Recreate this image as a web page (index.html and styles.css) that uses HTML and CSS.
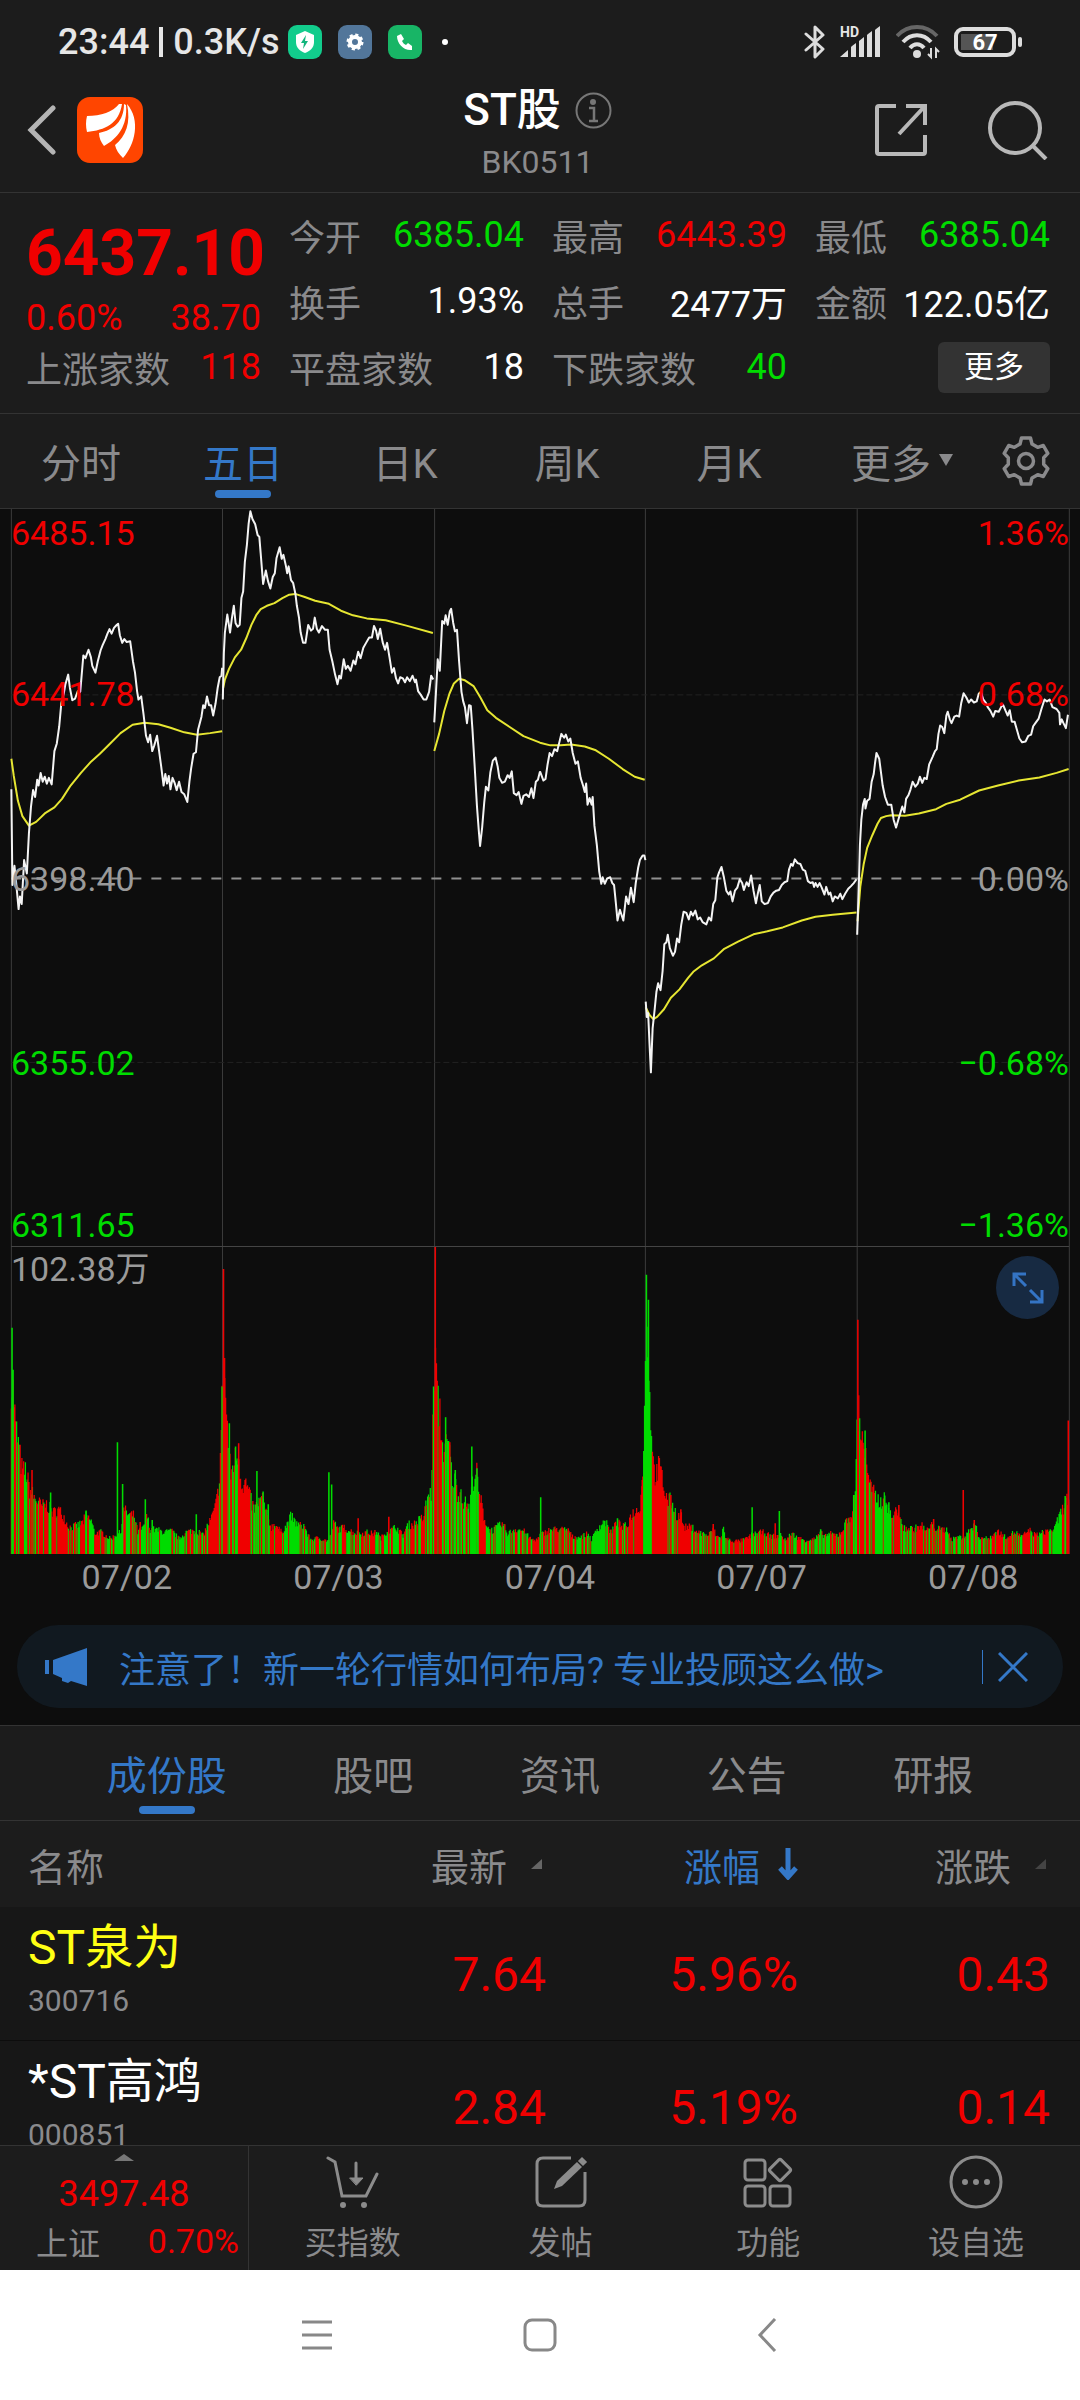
FILE: index.html
```html
<!DOCTYPE html>
<html lang="zh-CN">
<head>
<meta charset="utf-8">
<meta name="viewport" content="width=device-width, initial-scale=1">
<title>ST股 BK0511</title>
<link rel="stylesheet" href="styles.css">
</head>
<body>
<div class="app">
  <div class="status">
    <span class="status-text"><span>23:44</span><span class="status-bar"></span><span>0.3K/s</span></span>
    <span class="status-apps">
      <svg width="34" height="34" viewBox="0 0 34 34"><rect width="34" height="34" rx="9" fill="#12cc8c"/><path d="M17 6l9 4v7c0 6-4 9-9 11-5-2-9-5-9-11v-7z" fill="#fff"/><path d="M18 10l-5 8h3l-1 6 5-8h-3z" fill="#12b57c"/></svg>
      <svg width="34" height="34" viewBox="0 0 34 34"><rect width="34" height="34" rx="9" fill="#52769a"/><circle cx="17" cy="17" r="5" fill="none" stroke="#fff" stroke-width="4"/><circle cx="17" cy="17" r="7" fill="none" stroke="#fff" stroke-width="3" stroke-dasharray="3 2.5"/></svg>
      <svg width="34" height="34" viewBox="0 0 34 34"><rect width="34" height="34" rx="9" fill="#18b566"/><path d="M9 11l4-2 3 5-2 2c1 2 2 3 4 4l2-2 4 3v4c-8 1-15-6-15-14z" fill="#fff"/></svg>
    </span>
    <span class="status-dot"></span>
    <span class="status-right">
      <svg class="bt" width="22" height="34" viewBox="0 0 22 34"><path d="M2 9l17 15-8 8V2l8 8L2 25" fill="none" stroke="#ddd" stroke-width="3" stroke-linejoin="round" stroke-linecap="round"/></svg>
      <span class="signal">
        <svg width="42" height="32" viewBox="0 0 42 32"><path d="M0 31l8-7v7zM12 20l4-3v14h-5V21zM19 15l5-4v20h-5zM28 8l4-3v26h-5V9zM36 3l4-3v31h-5V4z" fill="#ddd"/></svg>
        <span class="hd">HD</span>
      </span>
      <svg class="wifi" width="44" height="36" viewBox="0 0 44 36"><g fill="none" stroke-width="4"><path d="M1 12C12 0 30 0 41 12" stroke="#666"/><path d="M7 18c8-9 20-9 28 0M14 24c4-5 10-5 14 0" stroke="#ddd"/></g><circle cx="21" cy="30" r="4" fill="#ddd"/><path d="M35 24v9l-3-3M40 34v-9l3 3" stroke="#ddd" stroke-width="2" fill="none"/></svg>
      <span class="battery"><span class="battery-text">67</span></span>
    </span>
  </div>

  <header class="title-bar">
    <div class="title-left">
      <button class="icon-btn" aria-label="返回"><svg width="30" height="50" viewBox="0 0 30 50"><path d="M26 3L4 25l22 22" fill="none" stroke="#b4b4b4" stroke-width="5" stroke-linecap="round"/></svg></button>
      <svg width="66" height="66" viewBox="0 0 66 66"><rect width="66" height="66" rx="13" fill="#ff4500"/><g fill="#fff"><path d="M42 7C36 15 24 19 10 19q-2 8 0 16C28 33 42 27 45 7z"/><path d="M47 7c0 17-10 26-25 29 0 5 2 9 5 13C40 42 51 29 49 8z"/><path d="M50 7c4 19-1 32-12 41 1 5 4 9 8 13 12-13 18-38 4-54z"/></g></svg>
    </div>
    <div class="title-mid">
      <h1>ST股<svg class="info" width="37" height="37" viewBox="0 0 37 37" fill="none" stroke="#777" stroke-width="2"><circle cx="18.500" cy="18.500" r="17"/><circle cx="18" cy="10" r="2" fill="#777"/><path d="M14 16h5v13M14 29h9" stroke-width="2.500"/></svg></h1>
      <p>BK0511</p>
    </div>
    <div class="title-right">
      <button class="icon-btn" aria-label="分享"><svg width="54" height="54" viewBox="0 0 54 54" fill="none" stroke="#b8b8b8" stroke-width="4"><path d="M22 3H5q-2 0-2 2v44q0 2 2 2h44q2 0 2-2V32"/><path d="M32 3h19v19M51 3L25 31"/></svg></button>
      <button class="icon-btn" aria-label="搜索"><svg width="60" height="60" viewBox="0 0 60 60" fill="none" stroke="#b8b8b8" stroke-width="4"><circle cx="27" cy="28" r="25"/><path d="M44 45l14 14"/></svg></button>
    </div>
  </header>

  <section class="quote">
    <div class="lead">
      <strong class="price up">6437.10</strong>
      <div class="pair"><span class="up">0.60%</span><span class="up">38.70</span></div>
    </div>
    <div class="pair"><span>今开</span><b class="down">6385.04</b></div>
    <div class="pair"><span>最高</span><b class="up">6443.39</b></div>
    <div class="pair"><span>最低</span><b class="down">6385.04</b></div>
    <div class="pair"><span>换手</span><b>1.93%</b></div>
    <div class="pair"><span>总手</span><b>2477万</b></div>
    <div class="pair"><span>金额</span><b>122.05亿</b></div>
    <div class="pair"><span>上涨家数</span><b class="up">118</b></div>
    <div class="pair"><span>平盘家数</span><b>18</b></div>
    <div class="pair"><span>下跌家数</span><b class="down">40</b></div>
    <div class="more-cell"><button class="more">更多</button></div>
  </section>

  <nav class="periods">
    <button class="tab">分时</button>
    <button class="tab active">五日</button>
    <button class="tab">日K</button>
    <button class="tab">周K</button>
    <button class="tab">月K</button>
    <button class="tab">更多<svg class="caret" width="14" height="12" viewBox="0 0 14 12"><path d="M0 0h14L7 12z" fill="#8a8a8c"/></svg></button>
    <button class="tab gear" aria-label="设置"><svg width="48" height="50" viewBox="-24 -25 48 50" fill="none" stroke="#8a8a8c" stroke-width="3.500" stroke-linejoin="round"><path d="M-6-17L-4.500-23H4.500L6-17 11.700-13.700 17.300-15.500 21.800-7.600 17.700-3.300V3.300L21.800 7.600 17.300 15.500 11.700 13.700 6 17 4.500 23H-4.500L-6 17-11.700 13.700-17.300 15.500-21.800 7.600-17.700 3.300V-3.300L-21.800-7.600-17.300-15.500-11.700-13.700z"/><circle r="7.500"/></svg></button>
  </nav>

  <section class="charts">
    <div class="price-chart">
      <svg class="plot" viewBox="0 22 3136 1927" preserveAspectRatio="none">
        <g class="grid"><path d="M33 22V1949M646 22V1949M1262 22V1949M1874 22V1949M2489 22V1949M3105 22V1949"/></g>
        <g class="grid faint"><path d="M33 508H3105M33 1469H3105"/></g>
        <path class="base" d="M33 988H3105"/>
        <g class="avg">
          <polyline points="33,675 40,720 52,785 65,825 84,850 105,840 130,818 158,802 180,780 205,745 235,712 265,682 290,662 320,635 350,608 385,586 420,581 460,585 495,594 535,606 572,612 610,608 645,603"/>
          <polyline points="648,490 653,468 665,440 682,410 700,390 715,360 730,325 745,298 757,284 775,275 797,268 820,255 840,246 857,244 885,252 915,262 955,270 990,288 1025,300 1065,308 1120,313 1180,327 1257,346"/>
          <polyline points="1261,655 1275,610 1290,550 1305,505 1318,478 1333,466 1350,470 1375,485 1395,515 1415,548 1440,568 1480,592 1520,616 1568,633 1598,640 1628,640 1658,638 1698,643 1728,652 1768,675 1808,702 1843,722 1872,730"/>
          <g transform="translate(1568)">
            <polyline points="307,1325 318,1345 329,1356 340,1350 360,1330 380,1300 405,1278 430,1248 445,1232 470,1215 505,1197 535,1172 575,1153 620,1134 660,1126 705,1116 760,1098 800,1088 850,1083 919,1077"/>
            <polyline points="922,1100 930,1010 940,950 950,908 965,875 980,845 990,830 1005,825 1020,823 1060,824 1100,818 1150,807 1180,793 1220,782 1275,758 1330,745 1390,732 1450,724 1500,712 1535,702"/>
          </g>
        </g>
        <g class="line">
          <polyline points="33,755 36,1005 42,955 47,1000 54,1068 58,1035 63,1055 70,940 78,975 84,870 90,800 96,757 102,775 108,730 112,745 118,712 124,735 130,722 136,740 142,725 150,742 158,655 165,635 172,590 178,530 186,500 190,480 198,455 203,490 210,522 218,518 226,498 233,500 242,405 248,412 257,390 264,410 268,432 277,450 284,420 292,392 298,378 306,362 312,348 318,336 324,348 331,333 338,326 343,322 348,352 355,372 361,362 368,370 378,368 386,420 392,450 398,498 402,520 410,512 417,560 424,615 430,632 436,612 442,655 448,640 456,615 462,655 468,695 475,745 480,715 485,740 490,720 495,755 501,725 507,738 513,757 520,735 527,762 535,768 544,788 550,735 555,700 562,662 569,658 575,600 585,565 590,535 595,542 601,512 607,535 613,535 619,562 626,530 632,490 638,462 643,458 645,437"/>
          <polyline points="647,520 650,400 653,345 660,298 668,345 673,310 679,275 684,320 690,330 696,325 701,255 706,238 711,160 717,115 722,60 727,28 733,48 741,62 748,90 753,95 758,150 764,218 772,183 778,210 785,230 792,200 798,190 803,150 812,122 818,152 823,142 830,170 834,190 838,172 845,208 851,215 858,245 862,275 868,305 873,345 880,372 887,372 895,325 903,340 909,335 914,306 920,335 926,345 935,328 944,338 952,338 957,390 965,420 973,455 980,480 985,458 990,465 998,415 1004,440 1010,432 1018,445 1026,418 1032,428 1040,395 1047,412 1055,385 1063,372 1072,358 1080,358 1086,328 1092,340 1097,362 1104,335 1111,370 1118,390 1124,372 1131,410 1138,450 1144,438 1150,465 1156,478 1162,462 1170,465 1176,475 1182,462 1190,472 1198,458 1205,475 1208,468 1214,498 1222,508 1230,520 1238,520 1246,500 1252,458 1258,468"/>
          <polyline points="1261,580 1266,500 1271,415 1277,445 1284,315 1290,322 1294,300 1300,325 1306,290 1310,283 1316,320 1321,342 1327,338 1333,420 1340,500 1345,525 1350,540 1356,582 1362,535 1367,537 1372,600 1378,690 1385,800 1390,860 1394,903 1400,855 1406,790 1411,748 1418,758 1424,710 1431,680 1439,672 1445,695 1450,725 1458,738 1466,735 1474,718 1480,725 1486,708 1492,765 1500,770 1506,762 1514,793 1520,772 1528,768 1536,775 1543,752 1549,778 1556,735 1562,730 1568,708"/>
          <g transform="translate(1568)">
            <polyline points="0,708 10,732 16,728 22,690 28,660 35,668 42,650 50,655 58,625 62,610 70,620 75,612 82,630 88,622 95,660 103,688 110,682 118,725 125,745 130,762 134,740 138,795 144,778 150,795 153,775 158,850 165,900 172,970 178,1002 182,985 188,1002 195,988 204,985 210,1000 215,1005 220,1050 225,1098 232,1070 242,1098 250,1035 257,1055 264,1012 272,1050 278,1000 285,960 290,940 298,928 303,928 306,940"/>
            <polyline points="307,1310 310,1350 314,1340 318,1420 322,1495 327,1380 333,1330 338,1285 343,1262 350,1280 356,1230 361,1160 367,1155 371,1135 377,1170 386,1190 392,1180 398,1145 404,1155 410,1110 417,1075 425,1078 432,1095 438,1075 444,1085 451,1072 458,1095 465,1090 472,1102 483,1108 490,1090 497,1098 503,1055 509,1045 515,985 520,972 527,958 534,985 541,1020 548,1030 553,1022 559,1048 566,1020 573,1012 580,990 587,1000 592,1018 600,998 606,1008 613,980 620,1020 627,1053 633,1025 638,1005 644,1048 652,1055 662,1052 670,1035 678,1025 686,1020 694,1018 702,1005 710,998 718,995 723,965 729,950 734,955 740,938 748,948 756,950 763,965 770,968 778,995 785,1000 792,998 796,1010 800,1000 806,1010 812,1000 818,1012 826,1030 831,1010 838,1030 843,1025 850,1048 856,1035 865,1040 872,1028 878,1042 886,1028 895,1015 903,1008 911,1000 919,990"/>
            <polyline points="921,1135 926,1000 929,900 933,835 938,795 943,780 945,805 950,785 957,780 963,735 969,715 973,685 977,660 985,675 990,710 995,745 1002,775 1010,795 1020,795 1027,835 1034,855 1042,830 1052,800 1058,815 1063,780 1070,770 1076,755 1082,735 1090,748 1097,740 1103,722 1110,738 1116,725 1123,728 1130,690 1140,670 1147,655 1152,650 1157,610 1162,588 1168,592 1174,608 1180,562 1184,552 1190,572 1195,582 1203,565 1210,562 1217,565 1223,530 1230,504 1238,515 1245,528 1252,520 1260,528 1268,525 1274,505 1280,500 1287,520 1294,528 1300,540 1308,550 1316,565 1322,550 1332,552 1340,538 1345,535 1352,550 1358,562 1364,548 1370,578 1378,578 1385,600 1392,622 1400,632 1410,630 1418,615 1426,612 1432,590 1440,580 1448,570 1456,545 1465,520 1472,525 1480,520 1488,540 1500,545 1508,555 1510,585 1515,572 1520,582 1527,595 1533,560"/>
          </g>
        </g>
      </svg>
      <ul class="scale left">
        <li class="up">6485.15</li><li class="up">6441.78</li><li>6398.40</li><li class="down">6355.02</li><li class="down">6311.65</li>
      </ul>
      <ul class="scale right">
        <li class="up">1.36%</li><li class="up">0.68%</li><li>0.00%</li><li class="down">−0.68%</li><li class="down">−1.36%</li>
      </ul>
    </div>
    <div class="volume-chart">
      <svg class="plot" id="volume" viewBox="0 109 3136 923" preserveAspectRatio="none">
        <g class="grid"><path d="M33 109V1032M646 109V1032M1262 109V1032M1874 109V1032M2489 109V1032M3105 109V1032"/></g>
      </svg>
      <span class="volume-max">102.38万</span>
      <button class="expand" aria-label="全屏"><svg width="32" height="32" viewBox="0 0 32 32" fill="none" stroke="#3474c4" stroke-width="3"><path d="M2 14V2h12M3 3l11 11M30 18v12H18M29 29L18 18"/></svg></button>
    </div>
    <ol class="dates"><li>07/02</li><li>07/03</li><li>07/04</li><li>07/07</li><li>07/08</li></ol>
    <div class="notice">
      <svg width="42" height="38" viewBox="0 0 42 38" fill="#3478c8"><path d="M0 12h4v14H0zM8 12L42 0v38l-16-5-3 2-6-2v-3l-9-4z"/></svg>
      <a href="#advice">注意了！新一轮行情如何布局? 专业投顾这么做&gt;</a>
      <button class="close" aria-label="关闭"><svg width="30" height="30" viewBox="0 0 30 30" fill="none" stroke="#3478c8" stroke-width="3"><path d="M1 1l28 28M29 1L1 29"/></svg></button>
    </div>
  </section>

  <nav class="sections">
    <button class="tab active">成份股</button>
    <button class="tab">股吧</button>
    <button class="tab">资讯</button>
    <button class="tab">公告</button>
    <button class="tab">研报</button>
  </nav>

  <main class="list">
    <table>
      <thead>
        <tr>
          <th scope="col">名称</th>
          <th scope="col"><button class="sort">最新<svg width="11" height="10" viewBox="0 0 11 10"><path d="M11 0v10H0z" fill="#666"/></svg></button></th>
          <th scope="col"><button class="sort on">涨幅<svg width="20" height="32" viewBox="0 0 20 32"><path d="M10 0v29M2 20l8 9 8-9" fill="none" stroke="#3478c8" stroke-width="5"/></svg></button></th>
          <th scope="col"><button class="sort">涨跌<svg width="11" height="10" viewBox="0 0 11 10"><path d="M11 0v10H0z" fill="#444"/></svg></button></th>
        </tr>
      </thead>
      <tbody>
        <tr><td><span class="name held">ST泉为</span><span class="code">300716</span></td><td>7.64</td><td>5.96%</td><td>0.43</td></tr>
        <tr><td><span class="name">*ST高鸿</span><span class="code">000851</span></td><td>2.84</td><td>5.19%</td><td>0.14</td></tr>
      </tbody>
    </table>
  </main>

  <footer class="toolbar">
    <button class="index">
      <svg class="index-caret" width="20" height="7" viewBox="0 0 20 7"><path d="M10 0l10 7H0z" fill="#777"/></svg>
      <span class="index-value up">3497.48</span>
      <span class="index-row"><span>上证</span><span class="up">0.70%</span></span>
    </button>
    <button class="tool"><svg width="54" height="54" viewBox="0 0 54 54" fill="none" stroke="#8c8c8c" stroke-width="3" stroke-linecap="round"><path d="M2 3l7 4 7 34h24L51 19M30 8v16"/><path d="M24 23h13l-6.500 7z" fill="#8c8c8c" stroke-width="1"/><circle cx="17" cy="50" r="3" fill="#8c8c8c" stroke="none"/><circle cx="38" cy="50" r="3" fill="#8c8c8c" stroke="none"/></svg>买指数</button>
    <button class="tool"><svg width="54" height="54" viewBox="0 0 54 54" fill="none" stroke="#8c8c8c" stroke-width="3"><path d="M37 3H9Q3 3 3 9v36q0 6 6 6h36q6 0 6-6V17"/><path d="M20 34l3-8L43 7l5 5-20 19z" fill="#8c8c8c" stroke="none"/><path d="M46 6l2-2 3 3-2 2z" fill="#8c8c8c"/></svg>发帖</button>
    <button class="tool"><svg width="54" height="54" viewBox="0 0 54 54" fill="none" stroke="#8c8c8c" stroke-width="3"><rect x="4" y="5" width="20" height="20" rx="3"/><rect x="4" y="31" width="20" height="20" rx="3"/><rect x="29" y="31" width="20" height="20" rx="3"/><rect x="31" y="7" width="16" height="16" rx="2" transform="rotate(45 39 15)"/></svg>功能</button>
    <button class="tool"><svg width="54" height="54" viewBox="0 0 54 54" fill="none" stroke="#8c8c8c" stroke-width="2"><circle cx="27" cy="27" r="25" stroke-width="3"/><g fill="#8c8c8c"><circle cx="16" cy="27" r="2"/><circle cx="27" cy="27" r="2"/><circle cx="38" cy="27" r="2"/></g></svg>设自选</button>
  </footer>

  <nav class="system">
    <button aria-label="任务"><svg width="32" height="34" viewBox="0 0 32 34" stroke="#888" stroke-width="3"><path d="M1 4h30M1 17h30M1 30h30"/></svg></button>
    <button aria-label="主页"><svg width="34" height="34" viewBox="0 0 34 34" fill="none" stroke="#888" stroke-width="3"><rect x="2" y="2" width="30" height="30" rx="7"/></svg></button>
    <button aria-label="后退"><svg width="28" height="34" viewBox="-8 0 28 34" fill="none" stroke="#888" stroke-width="3"><path d="M18 1L3 17l15 16"/></svg></button>
  </nav>
</div>
<script src="volume.js"></script>
</body>
</html>
```
FILE: styles.css
```css
* { box-sizing: border-box; }
body {
  margin: 0;
  background: #1c1c1c;
  color: #8a8a8c;
  font-family: Roboto, "Noto Sans CJK SC", sans-serif;
}
button {
  border: 0;
  padding: 0;
  background: none;
  color: inherit;
  font: inherit;
}
svg { display: block; flex: none; }
h1, p, ul, ol { margin: 0; padding: 0; list-style: none; }
.app { display: flex; flex-direction: column; height: 100vh; overflow: hidden; }
.app > * { flex: none; }
.up { color: #f00000; }
.down { color: #00dc00; }

.status { display: flex; align-items: center; height: 84px; padding: 0 58px; color: #e6e6e6; }
.status-text { display: flex; align-items: center; gap: 10px; font-size: 36px; font-weight: 500; }
.status-bar { width: 4px; height: 30px; background: currentColor; }
.status-apps { display: flex; gap: 16px; margin-left: 8px; }
.status-dot { width: 6px; height: 6px; margin-left: 20px; border-radius: 3px; background: #fff; }
.status-right { display: flex; align-items: center; gap: 14px; margin-left: auto; }
.signal { position: relative; }
.hd { position: absolute; left: 0; top: 0; font-size: 14px; line-height: 12px; font-weight: 700; }
.battery {
  position: relative;
  display: flex;
  align-items: center;
  justify-content: center;
  width: 62px;
  height: 30px;
  margin-right: 6px;
  border: 4px solid #ddd;
  border-radius: 9px;
  background: linear-gradient(#555, #555) 3px center / 32px 16px no-repeat;
}
.battery::after {
  content: "";
  position: absolute;
  right: -10px;
  width: 4px;
  height: 10px;
  border-radius: 2px;
  background: #ddd;
}
.battery-text { font-size: 22px; font-weight: 700; color: #fff; }

.title-bar {
  display: grid;
  grid-template-columns: 1fr auto 1fr;
  align-items: center;
  height: 109px;
  padding: 0 32px 12px 27px;
  border-bottom: 1px solid #333;
}
.title-left, .title-right { display: flex; align-items: center; padding-bottom: 8px; }
.title-left { gap: 20px; }
.title-right { justify-content: flex-end; gap: 60px; }
.title-mid { display: flex; flex-direction: column; align-items: center; gap: 4px; }
h1 { display: flex; align-items: center; gap: 14px; font-size: 44px; line-height: 52px; font-weight: 500; color: #fff; }
.title-mid p { font-size: 32px; line-height: 44px; }

.quote {
  display: grid;
  grid-template-columns: repeat(4, minmax(0, 1fr));
  grid-auto-rows: 66px;
  column-gap: 28px;
  padding: 9px 30px 13px 26px;
  font-size: 36px;
}
.lead { grid-row: span 2; }
.price { display: block; height: 98px; font-size: 64px; line-height: 104px; font-weight: 700; }
.lead .pair { height: 36px; }
.pair { display: flex; align-items: center; justify-content: space-between; white-space: nowrap; }
.pair b { font-weight: 400; color: #fff; }
.pair b.up { color: #f00000; }
.pair b.down { color: #00dc00; }
.more-cell { display: flex; align-items: center; justify-content: flex-end; }
.more { width: 112px; height: 51px; border-radius: 6px; background: #333; color: #fff; font-size: 30px; line-height: 44px; }

.periods { display: flex; height: 95px; border-top: 1px solid #333; }
.periods .tab { flex: 3; }
.periods .gear { flex: 2; display: flex; justify-content: center; align-items: center; }
.tab { position: relative; font-size: 40px; }
.tab.active { color: #3478c8; }
.tab.active::after {
  content: "";
  position: absolute;
  left: calc(50% - 28px);
  bottom: 10px;
  width: 56px;
  height: 8px;
  border-radius: 4px;
  background: #3478c8;
}
.caret { position: absolute; left: calc(50% + 48px); top: calc(50% - 7px); }

.charts { background: #0d0d0d; }
.plot { width: 100%; height: 100%; }
.plot * { vector-effect: non-scaling-stroke; }
.price-chart { position: relative; height: 738px; border-top: 1px solid #333; }
.volume-chart { position: relative; height: 308px; }
.volume-chart::before { content: ""; position: absolute; left: 11px; right: 11px; top: 0; height: 1px; background: #444; }
.grid { fill: none; stroke: #3c3c3c; stroke-width: 1; }
.faint { stroke: #222; stroke-dasharray: 6 3; }
.base { stroke: #909090; stroke-width: 2; stroke-dasharray: 10 10; }
.avg, .line { fill: none; stroke: #e6e632; stroke-width: 2; stroke-linejoin: round; }
.line { stroke: #f4f4f4; }
.scale li { position: absolute; font-size: 34px; line-height: 40px; }
.scale { color: #9a9a9a; }
.left li { left: 11px; }
.right li { right: 11px; }
.scale li:nth-child(1) { top: 4px; }
.scale li:nth-child(2) { top: calc(25% - 19px); }
.scale li:nth-child(3) { top: calc(50% - 19px); }
.scale li:nth-child(4) { top: calc(75% - 19px); }
.scale li:nth-child(5) { bottom: 1px; }
.volume-max { position: absolute; left: 11px; top: 3px; font-size: 34px; line-height: 40px; color: #9a9a9a; }
.expand {
  position: absolute;
  right: 21px;
  top: 10px;
  display: flex;
  align-items: center;
  justify-content: center;
  width: 63px;
  height: 63px;
  border-radius: 50%;
  background: #172a42;
}
.dates { display: flex; height: 46px; padding: 0 1px 0 21px; font-size: 34px; line-height: 46px; text-align: center; color: #9a9a9a; }
.dates li { flex: 1; }
.notice {
  display: flex;
  align-items: center;
  height: 83px;
  margin: 25px 17px 17px;
  padding: 0 35px 0 28px;
  border-radius: 42px;
  background: #111920;
}
.notice a { margin-left: 32px; color: #3478c8; font-size: 36px; text-decoration: none; white-space: nowrap; }
.close { display: flex; align-items: center; height: 34px; margin-left: auto; padding-left: 15px; border-left: 1px solid #3478c8; }

.sections { display: flex; justify-content: space-evenly; height: 96px; border: solid #333; border-width: 1px 0; }
.sections .tab.active::after { bottom: 6px; }

.app > .list { flex: 1 1 0; min-height: 0; overflow: hidden; background: #171717; }
table { width: 100%; table-layout: fixed; border-collapse: collapse; }
th { height: 86px; padding: 0 0 0 28px; background: #1c1c1c; font-size: 38px; font-weight: 400; text-align: right; }
th:nth-child(2), th:nth-child(3) { width: 252px; }
th:nth-child(4) { width: 282px; }
th:last-child, td:last-child { padding-right: 30px; }
.sort { display: inline-flex; align-items: center; gap: 24px; padding-right: 4px; }
.sort.on { gap: 18px; padding-right: 0; color: #3478c8; }
td { height: 133px; padding: 2px 0 0; font-size: 48px; text-align: right; color: #f00000; border-bottom: 1px solid #0d0d0d; }
th:first-child { text-align: left; }
td:first-child { padding: 0 0 6px 28px; text-align: left; }
.name { display: block; font-size: 48px; line-height: 56px; white-space: nowrap; color: #fff; }
.held { color: #ffff14; }
.code { display: block; padding-top: 6px; font-size: 30px; line-height: 38px; color: #8a8a8c; }

.toolbar { display: flex; height: 125px; border-top: 1px solid #333; }
.index { display: flex; flex-direction: column; align-items: center; width: 249px; padding-top: 8px; border-right: 1px solid #333; }
.index-value { margin-top: 10px; font-size: 36px; line-height: 46px; }
.index-row { display: flex; align-items: center; justify-content: space-between; align-self: stretch; height: 48px; padding: 0 9px 0 36px; font-size: 32px; }
.index-row .up { font-size: 34px; }
.tool { display: flex; flex: 1; flex-direction: column; align-items: center; gap: 10px; padding-top: 9px; font-size: 32px; line-height: 48px; }

.system { display: grid; grid-template-columns: repeat(3, 1fr); height: 130px; padding: 0 19%; background: #fff; }
.system button { display: flex; align-items: center; justify-content: center; }
```
FILE: volume.js
```js
// Five-day minute volume. Points are [x, top]; the baseline is y = 1032.
const BASE = 1032;
const STEP = 2.55;
const second = 1568;

const firstHalf = "33,500 40,540 45,640 52,680 58,730 65,780 75,775 85,830 100,860 110,870 120,885 135,880 155,905 170,895 185,915 197,945 205,950 225,945 240,935 250,915 265,930 275,968 295,965 320,985 345,968 350,968 360,895 372,910 390,915 400,965 415,955 428,915 435,955 455,958 480,965 500,962 520,985 540,965 560,960 578,965 590,975 600,950 613,925 625,890 632,850 637,800 643,650 647,480 652,480 656,570 660,640 670,790 680,745 692,720 698,790 705,820 712,810 722,840 732,880 740,895 752,870 764,860 772,905 788,950 800,938 815,965 832,945 845,915 855,932 870,945 885,945 893,975 905,988 925,982 945,990 956,990 970,935 980,955 1000,952 1025,965 1048,970 1065,965 1085,970 1095,962 1105,985 1120,965 1135,960 1150,948 1170,975 1185,942 1200,942 1215,930 1230,920 1242,855 1252,845 1257,650 1262,450 1267,470 1271,570 1278,600 1284,700 1290,710 1299,700 1306,710 1312,800 1322,810 1330,850 1338,835 1348,880 1356,870 1364,900 1367,850 1376,790 1385,785 1390,850 1398,875 1405,915 1415,950 1430,960 1445,948 1460,940 1475,970 1495,955 1520,960 1535,980 1550,990 1567,982";
const secondHalf = "0,975 25,960 50,955 82,960 95,980 115,980 140,970 150,990 165,955 185,936 195,942 205,965 225,935 240,950 255,942 265,910 280,900 290,885 297,820 302,640 306,480 314,300 318,550 322,600 326,690 332,785 340,785 346,760 355,800 362,840 372,870 380,865 388,890 400,920 409,910 418,950 440,950 460,965 490,975 503,955 512,975 525,985 532,950 540,985 560,992 580,992 600,985 620,970 650,965 670,978 700,975 715,990 730,968 745,980 770,990 800,985 815,968 825,975 845,970 865,975 880,955 893,925 905,910 915,850 920,660 925,570 932,655 940,680 949,765 956,820 965,840 975,855 985,870 1001,865 1013,890 1020,925 1030,905 1042,895 1050,950 1085,955 1110,945 1120,962 1143,940 1150,955 1185,958 1195,990 1210,980 1233,980 1262,940 1275,980 1300,985 1330,962 1350,980 1380,965 1400,980 1420,958 1440,975 1470,962 1495,955 1508,915 1518,895 1525,870 1535,860";

// Single tall bars: x, top, colour
const spikes = [
  [35, 354, "g"], [38, 480, "g"], [93, 780, "r"], [147, 848, "g"], [250, 902, "g"], [341, 697, "g"], [356, 822, "g"],
  [407, 936, "r"], [422, 868, "g"], [442, 930, "g"], [570, 913, "g"], [645, 530, "g"], [649, 178, "r"], [652, 445, "r"],
  [666, 640, "g"], [684, 710, "g"], [693, 700, "r"], [746, 783, "g"], [764, 845, "g"], [779, 883, "g"], [955, 787, "g"],
  [963, 824, "g"], [1040, 925, "r"], [1129, 920, "r"], [1259, 530, "g"], [1264, 109, "r"], [1267, 460, "r"],
  [1294, 622, "g"], [1306, 697, "r"], [1322, 780, "g"], [1370, 710, "g"], [1385, 775, "g"], [1570, 862, "g"],
  [1650, 955, "r"], [1756, 932, "g"], [1793, 925, "g"], [1865, 810, "r"], [1877, 195, "g"], [1883, 270, "g"],
  [1914, 755, "r"], [1948, 855, "r"], [1977, 898, "r"], [2071, 942, "r"], [2184, 892, "g"], [2251, 940, "r"],
  [2263, 903, "g"], [2383, 958, "g"], [2479, 855, "g"], [2491, 330, "r"], [2512, 662, "g"], [2525, 818, "g"],
  [2569, 857, "g"], [2581, 877, "g"], [2610, 885, "r"], [2711, 927, "r"], [2797, 840, "r"], [2829, 930, "r"],
  [3093, 858, "g"], [3102, 632, "r"]
];

// Share of green bars up to each x
const mix = [
  [75, 0.5], [150, 0.35], [197, 0.05], [235, 0.6], [258, 0.3], [273, 0.8], [310, 0.1], [470, 0.75], [545, 0.7], [600, 0.3],
  [613, 0.5], [660, 0.03], [690, 0.5], [730, 0.08], [785, 0.6], [830, 0.3], [890, 0.8], [950, 0.5], [1048, 0.6],
  [1090, 0.15], [1175, 0.65], [1256, 0.4], [1284, 0.1], [1390, 0.8], [1412, 0.03], [1520, 0.6], [1568, 0.3],
  [1645, 0.35], [1718, 0.5], [1752, 0.98], [1823, 0.6], [1868, 0.1], [1893, 0.95], [1938, 0.05], [1968, 0.5],
  [2008, 0.15], [2098, 0.45], [2120, 0.9], [2183, 0.3], [2325, 0.5], [2418, 0.75], [2470, 0.3], [2488, 0.5],
  [2543, 0.08], [2603, 0.6], [2618, 0.05], [2748, 0.4], [2878, 0.6], [2913, 0.2], [3060, 0.5], [3098, 0.8], [3140, 0]
];

const parse = (text, shift) => text.split(" ").map(pair => {
  const [x, y] = pair.split(",").map(Number);
  return [x + shift, y];
});
const envelope = parse(firstHalf, 0).concat(parse(secondHalf, second));

let seed = 7;
const random = () => (seed = (seed * 16807) % 2147483647) / 2147483647;

const svg = document.getElementById("volume");
let run = "";
let runColour = "";
function flush() {
  if (!run) return;
  const path = document.createElementNS("http://www.w3.org/2000/svg", "path");
  path.setAttribute("d", run);
  path.setAttribute("fill", runColour === "g" ? "#00dc00" : "#f00000");
  svg.append(path);
  run = "";
}
function bar(x, top, colour, width) {
  if (colour !== runColour) {
    flush();
    runColour = colour;
  }
  run += `M${x - width / 2} ${BASE}V${top}h${width}V${BASE}z`;
}

let knot = 0;
for (let x = 33; x < 3105; x += STEP) {
  while (knot < envelope.length - 2 && envelope[knot + 1][0] < x) knot++;
  const [x0, y0] = envelope[knot];
  const [x1, y1] = envelope[knot + 1];
  const top = y0 + (y1 - y0) * Math.min(1, (x - x0) / (x1 - x0));
  const height = (BASE - top) * (0.82 + random() * 0.3);
  const share = mix.find(entry => x <= entry[0])[1];
  bar(x, BASE - height, random() < share ? "g" : "r", 3.6);
}
spikes.forEach(([x, top, colour]) => bar(x, top, colour, 4.5));
flush();
```
